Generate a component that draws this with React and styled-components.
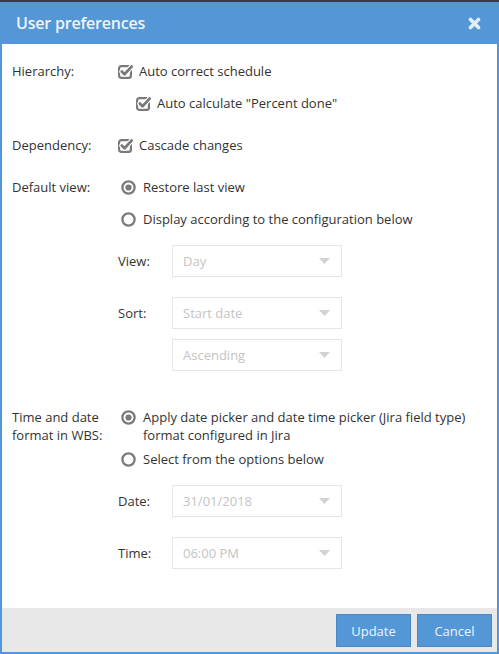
import React from "react";
import styled, { createGlobalStyle } from "styled-components";

const Global = createGlobalStyle`
  html, body { margin: 0; padding: 0; background: #fff; }
  body { font-family: "Open Sans", "Noto Sans", sans-serif; font-size: 13px; color: #333; }
  * { box-sizing: border-box; }
`;

const Page = styled.div`
  width: 499px;
  height: 654px;
  display: flex;
  flex-direction: column;
  background: #3a3a3a;
`;

const TopStrip = styled.div`
  height: 2px;
  background: #3b3b3b;
  flex: none;
`;

const Dialog = styled.div`
  flex: 1;
  display: flex;
  flex-direction: column;
  border: 2px solid #5497d6;
  border-top: none;
  background: #fff;
`;

const Header = styled.div`
  height: 42px;
  flex: none;
  background: #5497d6;
  display: flex;
  align-items: center;
  justify-content: space-between;
  padding: 0 16px 0 14px;
`;

const Title = styled.h1`
  margin: 0;
  font-size: 16px;
  font-weight: 600;
  color: #eef4fb;
  letter-spacing: -0.2px;
`;

const CloseButton = styled.button`
  border: none;
  background: transparent;
  padding: 0;
  width: 14px;
  height: 14px;
  display: flex;
  align-items: center;
  justify-content: center;
  cursor: pointer;
`;

const Body = styled.div`
  flex: 1;
  padding: 18px 10px 0 10px;
  display: flex;
  flex-direction: column;
`;

const Row = styled.div`
  display: grid;
  grid-template-columns: 106px 1fr;
  margin-top: ${(p) => p.$mt || 0}px;
`;

const Label = styled.div`
  line-height: 18px;
  color: #333;
`;

const Controls = styled.div`
  display: flex;
  flex-direction: column;
`;

const Option = styled.label`
  display: flex;
  align-items: flex-start;
  gap: ${(p) => (p.$radio ? 7 : 6)}px;
  line-height: 18px;
  margin-top: ${(p) => p.$mt || 0}px;
  margin-left: ${(p) => p.$indent || 0}px;
  color: #333;
`;

const IconBox = styled.span`
  flex: none;
  display: flex;
  align-items: center;
  height: 18px;
  margin-left: ${(p) => p.$ml || 0}px;
`;

const SubField = styled.div`
  display: grid;
  grid-template-columns: 54px 170px;
  align-items: center;
  margin-top: ${(p) => p.$mt || 0}px;
`;

const SubLabel = styled.div`
  color: #333;
  line-height: 18px;
`;

const Select = styled.div`
  grid-column: 2;
  height: 32px;
  border: 1px solid #e6e6e6;
  display: flex;
  align-items: center;
  justify-content: space-between;
  padding: 0 11px 0 10px;
  color: #c4c4c4;
`;

const Footer = styled.div`
  height: 44px;
  flex: none;
  background: #e8e8e8;
  display: flex;
  justify-content: flex-end;
  align-items: flex-start;
  gap: 6px;
  padding: 6px 5px 0 0;
`;

const Button = styled.button`
  width: 75px;
  height: 33px;
  background: #5497d6;
  border: 1px solid #4a87c4;
  color: #eef4fb;
  font-family: "Open Sans", "Noto Sans", sans-serif;
  font-size: 13px;
  padding: 0;
  cursor: pointer;
`;

const CheckIcon = () => (
  <svg width="15" height="15" viewBox="0 0 15 15">
    <rect x="1.1" y="2.1" width="11.8" height="11.8" rx="2.2" fill="none" stroke="#7a7a7a" strokeWidth="2.2" />
    <path d="M3.8 7.6 L6.5 10.2 L13.6 2.6" fill="none" stroke="#fff" strokeWidth="5" strokeLinecap="round" strokeLinejoin="round" />
    <path d="M3.8 7.6 L6.5 10.2 L13.6 2.6" fill="none" stroke="#7a7a7a" strokeWidth="2.8" strokeLinecap="round" strokeLinejoin="round" />
  </svg>
);

const RadioIcon = ({ checked }) => (
  <svg width="15" height="15" viewBox="0 0 15 15">
    <circle cx="7.5" cy="7.5" r="6.1" fill="#fff" stroke="#7a7a7a" strokeWidth="2.3" />
    {checked && <circle cx="7.5" cy="7.5" r="3.1" fill="#7a7a7a" />}
  </svg>
);

const CloseIcon = () => (
  <svg width="13" height="13" viewBox="0 0 13 13">
    <path d="M2.5 2.5 L10.5 10.5 M10.5 2.5 L2.5 10.5" stroke="#e3edf8" strokeWidth="3.6" strokeLinecap="round" />
  </svg>
);

const Caret = () => (
  <svg width="11" height="6" viewBox="0 0 11 6">
    <path d="M0 0 H11 L5.5 6 Z" fill="#d2d2d2" />
  </svg>
);

const Check = ({ children, mt, indent }) => (
  <Option $mt={mt} $indent={indent}>
    <IconBox>
      <CheckIcon />
    </IconBox>
    <span>{children}</span>
  </Option>
);

const Radio = ({ children, checked, mt }) => (
  <Option $radio $mt={mt}>
    <IconBox $ml={3}>
      <RadioIcon checked={checked} />
    </IconBox>
    <span>{children}</span>
  </Option>
);

const Field = ({ label, value, mt }) => (
  <SubField $mt={mt}>
    {label ? <SubLabel>{label}</SubLabel> : null}
    <Select>
      <span>{value}</span>
      <Caret />
    </Select>
  </SubField>
);

export default function App() {
  return (
    <>
      <Global />
      <Page>
        <TopStrip />
        <Dialog>
          <Header>
            <Title>User preferences</Title>
            <CloseButton aria-label="Close">
              <CloseIcon />
            </CloseButton>
          </Header>
          <Body>
            <Row>
              <Label>Hierarchy:</Label>
              <Controls>
                <Check>Auto correct schedule</Check>
                <Check mt={14} indent={18}>Auto calculate "Percent done"</Check>
              </Controls>
            </Row>
            <Row $mt={24}>
              <Label>Dependency:</Label>
              <Controls>
                <Check>Cascade changes</Check>
              </Controls>
            </Row>
            <Row $mt={24}>
              <Label>Default view:</Label>
              <Controls>
                <Radio checked>Restore last view</Radio>
                <Radio mt={14}>Display according to the configuration below</Radio>
                <Field mt={17} label="View:" value="Day" />
                <Field mt={20} label="Sort:" value="Start date" />
                <Field mt={10} value="Ascending" />
              </Controls>
            </Row>
            <Row $mt={37}>
              <Label>
                Time and date
                <br />
                format in WBS:
              </Label>
              <Controls>
                <Radio checked>
                  Apply date picker and date time picker (Jira field type)
                  <br />
                  format configured in Jira
                </Radio>
                <Radio mt={6}>Select from the options below</Radio>
                <Field mt={17} label="Date:" value="31/01/2018" />
                <Field mt={20} label="Time:" value="06:00 PM" />
              </Controls>
            </Row>
          </Body>
          <Footer>
            <Button>Update</Button>
            <Button>Cancel</Button>
          </Footer>
        </Dialog>
      </Page>
    </>
  );
}
